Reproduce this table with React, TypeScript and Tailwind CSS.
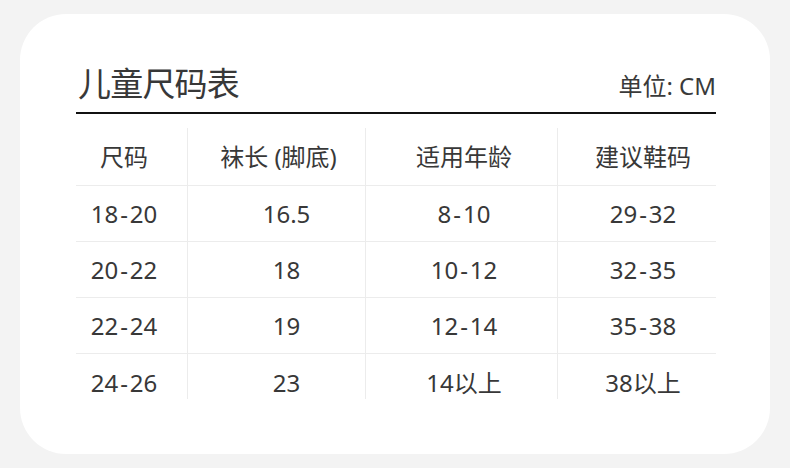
import React from "react";

const rows = [
  ["18-20", "16.5", "8-10", "29-32"],
  ["20-22", "18", "10-12", "32-35"],
  ["22-24", "19", "12-14", "35-38"],
  ["24-26", "23", "14以上", "38以上"],
];

const font = { fontFamily: '"Noto Sans", "Noto Sans CJK SC", sans-serif' };

// per-column padding so the text sits where the picture has it
const headPad = ["pr-[15px]", "pl-[4px]", "pl-[5px]", "pl-[12px]"];
const cellPad = ["pr-[15px]", "pl-[20px]", "pl-[5px]", "pl-[12px]"];

// the dash in the ranges sits wider than a plain hyphen
function Value({ text }: { text: string }) {
  const parts = text.split("-");
  if (parts.length < 2) return <>{text}</>;
  return (
    <>
      {parts[0]}
      <span className="mx-[2px]">-</span>
      {parts[1]}
    </>
  );
}

export default function App() {
  return (
    <div className="h-[468px] w-[790px] bg-[#f3f3f3] pt-[14px] pl-[20px]" style={font}>
      <div className="h-[440px] w-[750px] rounded-[46px] bg-white pl-[56px] pt-[50px]">
        <div className="w-[640px]">
          {/* Header */}
          <div className="flex items-end justify-between border-b-2 border-[#111] pb-[8px] pl-[2px]">
            <div className="text-[33px] leading-[40px] tracking-[-0.8px] text-[#383838]">
              儿童尺码表
            </div>
            <div className="mb-[3px] text-[24px] leading-[30px] text-[#3a3a3a]">单位: CM</div>
          </div>

          {/* Table */}
          <div className="mt-[14px] grid grid-cols-[111px_178px_192px_159px] text-[#383838]">
            {["尺码", "袜长 (脚底)", "适用年龄", "建议鞋码"].map((h, i) => (
              <div
                key={h}
                className={`flex h-[58px] items-center justify-center border-b border-[#ececec] text-[24px] ${
                  i > 0 ? "border-l" : ""
                } ${headPad[i]}`}
              >
                {h}
              </div>
            ))}
            {rows.map((r, ri) =>
              r.map((c, ci) => (
                <div
                  key={`${ri}-${ci}`}
                  className={`flex justify-center border-[#ececec] text-[24px] ${
                    ri < rows.length - 1
                      ? "h-[56px] items-center border-b"
                      : "h-[45px] items-start pt-[12px] leading-[33px]"
                  } ${ci > 0 ? "border-l" : ""} ${cellPad[ci]}`}
                >
                  <Value text={c} />
                </div>
              ))
            )}
          </div>
        </div>
      </div>
    </div>
  );
}
